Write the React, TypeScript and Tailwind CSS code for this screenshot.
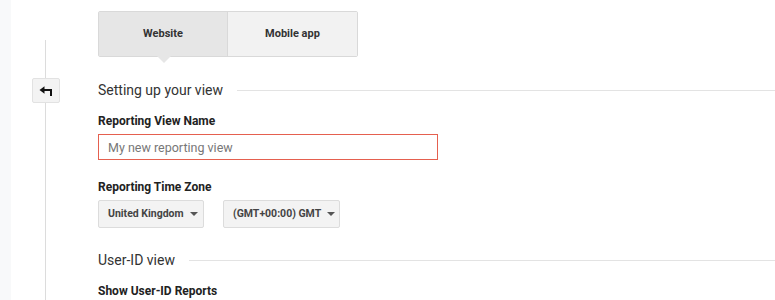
import React from 'react';

function Caret() {
  return <span className="ml-auto inline-block h-0 w-0 shrink-0 border-x-[4px] border-t-[4px] border-x-transparent border-t-[#555]"></span>;
}

function Dropdown({ label, width }: { label: string; width: string }) {
  return (
    <div className={`flex h-[28px] items-center gap-[6px] whitespace-nowrap rounded-[2px] border border-[#dcdcdc] bg-[#f3f3f3] pl-[9px] pr-[8px] text-[10.5px] font-bold text-[#444] ${width}`}>
      <span>{label}</span>
      <Caret />
    </div>
  );
}

function SectionTitle({ text }: { text: string }) {
  return (
    <div className="flex items-center">
      <span className="text-[14px] leading-[20px] text-[#333]">{text}</span>
      <div className="ml-[14px] h-px flex-1 bg-[#e3e3e3]"></div>
    </div>
  );
}

export default function App() {
  return (
    <div className="flex h-[300px] w-[775px] overflow-hidden bg-white font-['Roboto',sans-serif]">
      {/* left strip */}
      <div className="w-[11px] bg-[#f8f9fa]"></div>

      {/* back rail */}
      <div className="flex w-[69px] flex-col items-center pt-[40px]">
        <div className="h-[38px] w-px bg-[#dcdcdc]"></div>
        <button className="flex h-[25px] w-[28px] items-center justify-center rounded-[2px] border border-[#e2e2e2] bg-[#f3f3f3]">
          <svg width="14" height="10" viewBox="0 0 14 10">
            <path d="M12 10 V4 H5" fill="none" stroke="#111" strokeWidth="2" />
            <path d="M0.5 4 L5.5 0.3 V7.7 Z" fill="#111" />
          </svg>
        </button>
        <div className="w-px flex-1 bg-[#dcdcdc]"></div>
      </div>

      {/* content */}
      <div className="ml-[18px] flex flex-1 flex-col pt-[11px]">
        <div className="relative flex h-[46px] w-[260px] rounded-[2px] border border-[#d9d9d9] text-[11px] font-bold text-[#333]">
          <div className="flex w-[129px] items-center justify-center border-r border-[#d9d9d9] bg-[#e6e6e6]">Website</div>
          <div className="flex flex-1 items-center justify-center bg-[#f2f2f2]">Mobile app</div>
          <span className="absolute left-[58px] top-[44px] h-0 w-0 border-x-[7px] border-t-[7px] border-x-transparent border-t-[#e6e6e6]"></span>
        </div>

        <div className="mt-[23px]">
          <SectionTitle text="Setting up your view" />
        </div>

        <div className="mt-[13px] text-[12px] font-bold leading-[16px] text-[#222]">Reporting View Name</div>
        <input
          className="mt-[5px] h-[26px] w-[340px] border border-[#e5604f] px-[9px] text-[12.5px] text-[#333] outline-none placeholder:text-[#777]"
          placeholder="My new reporting view"
        />

        <div className="mt-[19px] text-[12px] font-bold leading-[16px] text-[#222]">Reporting Time Zone</div>
        <div className="mt-[5px] flex gap-[19px]">
          <Dropdown label="United Kingdom" width="w-[106px]" />
          <Dropdown label="(GMT+00:00) GMT" width="w-[117px]" />
        </div>

        <div className="mt-[22px]">
          <SectionTitle text="User-ID view" />
        </div>

        <div className="mt-[13px] text-[12px] font-bold leading-[16px] text-[#222]">Show User-ID Reports</div>
      </div>
    </div>
  );
}
